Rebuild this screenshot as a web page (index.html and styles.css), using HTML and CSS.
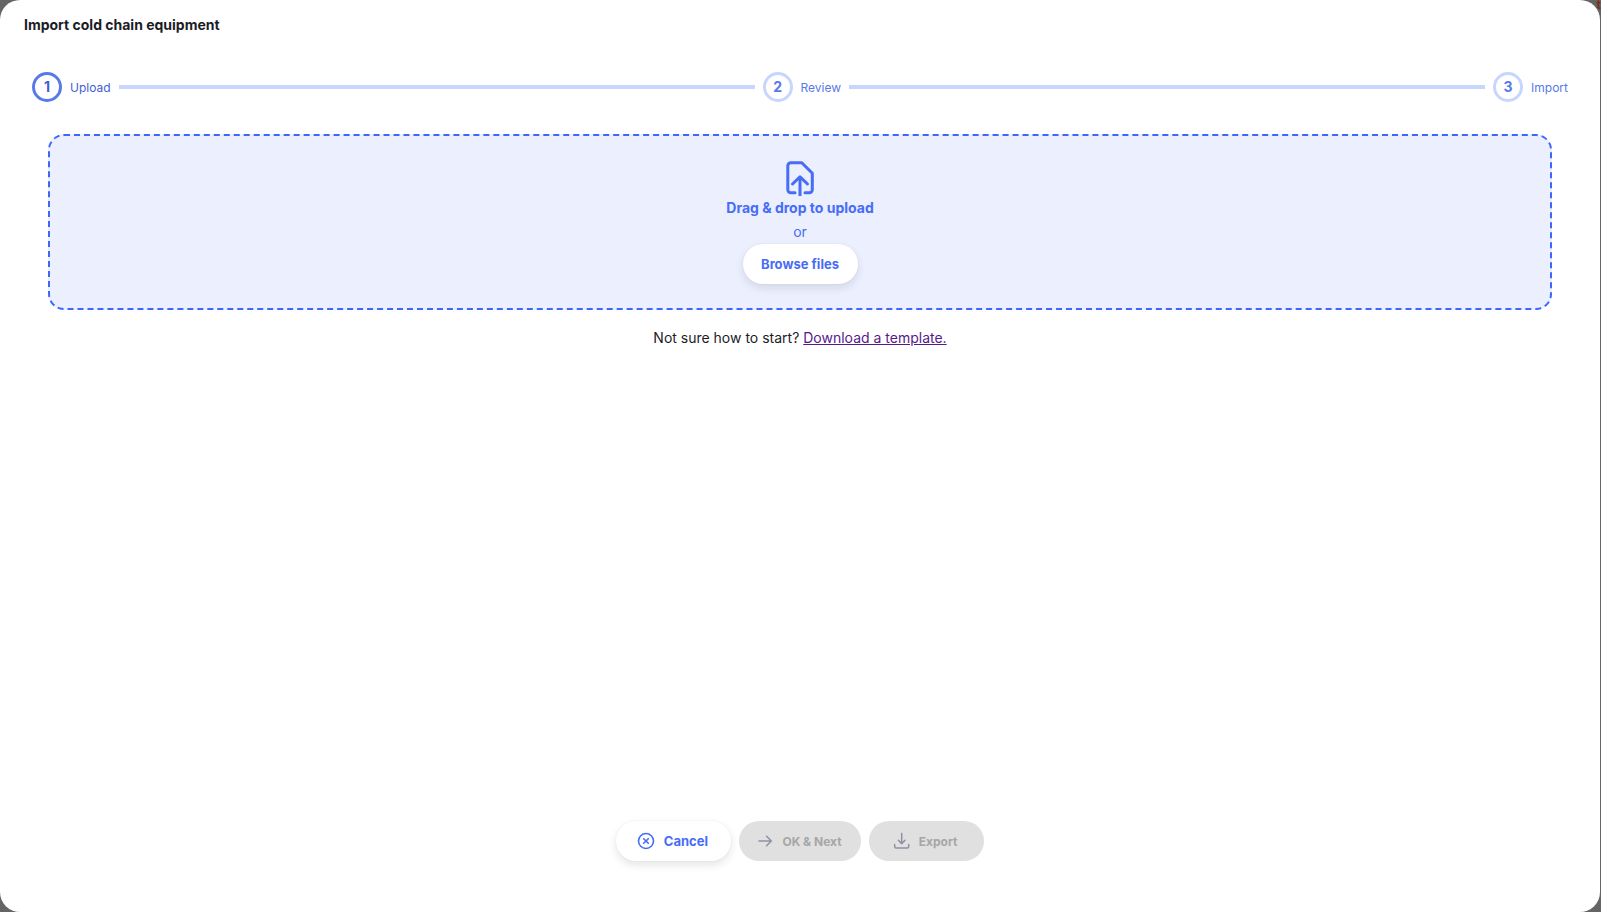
FILE: index.html
```html
<!DOCTYPE html>
<html lang="en">
<head>
<meta charset="utf-8">
<title>Import cold chain equipment</title>
<link rel="stylesheet" href="styles.css">
</head>
<body>
<span class="backdrop-text" aria-hidden="true">t</span>
<div class="dialog" role="dialog" aria-labelledby="dialog-title">
  <h1 class="dialog-title" id="dialog-title">Import cold chain equipment</h1>
  <ol class="stepper">
    <li class="step step-active"><span class="step-number">1</span><span class="step-label">Upload</span></li>
    <li class="connector" role="presentation"></li>
    <li class="step"><span class="step-number">2</span><span class="step-label">Review</span></li>
    <li class="connector" role="presentation"></li>
    <li class="step"><span class="step-number">3</span><span class="step-label">Import</span></li>
  </ol>
  <main class="content">
    <section class="dropzone">
      <svg class="upload-icon" viewBox="0 0 36 36" fill="none" stroke="currentColor" stroke-width="3" stroke-linejoin="round" aria-hidden="true">
        <path stroke-linecap="round" d="M13 32.800H8.800a3 3 0 0 1-3-3V5.800a3 3 0 0 1 3-3H19.800L30.300 13.300V29.800a3 3 0 0 1-3 3H23"/>
        <path d="M18 36V17.500"/>
        <path stroke-linecap="round" d="M10.500 24L18 16.800L25.500 24"/>
      </svg>
      <p class="drop-title">Drag &amp; drop to upload</p>
      <p class="drop-or">or</p>
      <button class="button" type="button">Browse files</button>
    </section>
    <p class="hint">Not sure how to start? <a class="link" href="#template">Download a template.</a></p>
  </main>
  <footer class="actions">
    <button class="button" type="button">
      <svg class="icon" viewBox="0 0 20 20" fill="none" stroke="currentColor" stroke-width="1.600" stroke-linecap="round" aria-hidden="true"><circle cx="10" cy="10" r="7.500"/><path d="M7.700 7.700l4.600 4.600M12.300 7.700l-4.600 4.600"/></svg>
      <span class="button-label">Cancel</span>
    </button>
    <button class="button button-small" type="button" disabled>
      <svg class="icon" viewBox="0 0 20 20" fill="none" stroke="currentColor" stroke-width="1.500" stroke-linecap="round" stroke-linejoin="round" aria-hidden="true"><path d="M5 10h12.300M12.600 5.300L17.300 10l-4.700 4.700"/></svg>
      <span class="button-label">OK &amp; Next</span>
    </button>
    <button class="button button-small" type="button" disabled>
      <svg class="icon" viewBox="0 0 20 20" fill="none" stroke="currentColor" stroke-width="1.500" stroke-linecap="round" stroke-linejoin="round" aria-hidden="true"><path d="M10.700 2.500v10M7.400 9.300l3.300 3.300 3.300-3.300M3.700 13.500v2a1.500 1.500 0 0 0 1.500 1.500h11a1.500 1.500 0 0 0 1.500-1.500v-2"/></svg>
      <span class="button-label">Export</span>
    </button>
  </footer>
</div>
</body>
</html>
```
FILE: styles.css
```css
* { box-sizing: border-box; }

body {
  margin: 0;
  padding-right: 1px;
  background: #656565;
  color: #1c1c28;
  font-family: Inter, "Liberation Sans", sans-serif;
  font-size: 14px;
  line-height: 20px;
}

.backdrop-text {
  position: absolute;
  top: -5px;
  right: 0;
  color: #7d2b18;
  font-size: 12px;
  font-weight: 700;
}

.dialog {
  position: relative;
  display: flex;
  flex-direction: column;
  min-height: 100vh;
  padding: 15px 24px 51px;
  border-radius: 20px;
  background: #fff;
}

.dialog-title {
  margin: 0;
  font-size: 14px;
  font-weight: 700;
  line-height: 20px;
}

.stepper {
  display: flex;
  align-items: center;
  gap: 8px;
  margin: 37px 0 0;
  padding: 0 8px;
  list-style: none;
}

.step {
  display: flex;
  align-items: center;
  gap: 8px;
  color: #567aea;
}

.step-active { color: #3e5fd2; }

.step-number {
  display: flex;
  align-items: center;
  justify-content: center;
  width: 30px;
  height: 30px;
  border: 3px solid #c7d6ff;
  border-radius: 50%;
  font-weight: 700;
}

.step-active .step-number { border-color: #567aea; }

.step-label {
  padding-top: 2px;
  font-size: 12px;
  line-height: 16px;
}

.connector {
  flex: 1;
  height: 4px;
  background: #c7d6ff;
}

.content {
  flex: 1;
  padding: 32px 24px 0;
}

.dropzone {
  display: flex;
  flex-direction: column;
  align-items: center;
  padding: 24px;
  border: 2px dashed #3e66fa;
  border-radius: 16px;
  background: #ebeffe;
  color: #476cf6;
}

.upload-icon {
  width: 36px;
  height: 36px;
}

.drop-title,
.drop-or {
  margin: 0;
  line-height: 24px;
}

.drop-title { font-weight: 700; }

.button {
  display: flex;
  align-items: center;
  justify-content: center;
  gap: 8px;
  min-width: 115px;
  height: 40px;
  padding: 0 18px;
  border: 0;
  border-radius: 20px;
  background: #fff;
  box-shadow: 0 4px 8px rgba(40, 41, 61, 0.12), 0 0 2px rgba(40, 41, 61, 0.06);
  color: #476cf6;
  font-family: inherit;
  font-size: 13px;
  font-weight: 700;
}

.button-small {
  padding: 0 19px;
  font-size: 12px;
}

.button:disabled {
  background: #e0e0e0;
  box-shadow: none;
  color: #a6a6a6;
}

.icon {
  width: 20px;
  height: 20px;
  margin-left: -4px;
}

.button:disabled .icon { color: #8f90a6; }

.hint {
  margin: 18px 0 0;
  text-align: center;
}

.link { color: #551a8b; }

.actions {
  display: flex;
  justify-content: center;
  gap: 8px;
}
```
